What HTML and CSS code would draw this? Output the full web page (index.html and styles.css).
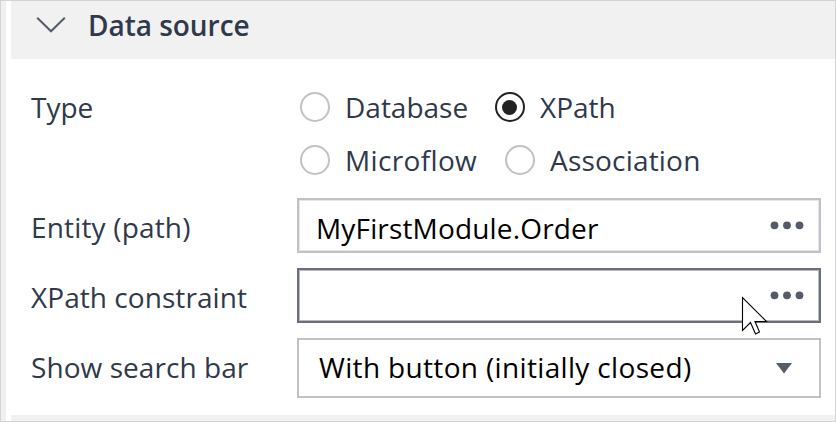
FILE: index.html
```html
<!DOCTYPE html>
<html lang="en">
<head>
<meta charset="utf-8">
<title>Data source</title>
<link rel="stylesheet" href="styles.css">
</head>
<body>
<div class="window">
  <div class="gutter"></div>
  <main class="panel">
    <header class="section-header">
      <svg class="chevron" width="30" height="18" viewBox="0 0 30 18"><path d="M1.2 1.8 15 15.3 28.8 1.8" fill="none" stroke="#555b68" stroke-width="2"/></svg>
      <h1 class="title">Data source</h1>
    </header>
    <form class="form">
      <div class="row row-type">
        <span class="label">Type</span>
        <div class="options">
          <div class="option-line">
            <label class="option"><span class="radio"></span><span class="t-database">Database</span></label>
            <label class="option"><span class="radio checked"></span><span class="t-xpath">XPath</span></label>
          </div>
          <div class="option-line">
            <label class="option"><span class="radio"></span><span class="t-microflow">Microflow</span></label>
            <label class="option"><span class="radio"></span><span class="t-association">Association</span></label>
          </div>
        </div>
      </div>
      <div class="row">
        <span class="label t-entity">Entity (path)</span>
        <div class="field"><span class="value t-order">MyFirstModule.Order</span>
          <svg class="dots" width="34" height="10" viewBox="0 0 34 10" fill="#555b68"><circle cx="4.5" cy="5.3" r="3.9"/><circle cx="17" cy="5.3" r="3.9"/><circle cx="29.5" cy="5.3" r="3.9"/></svg>
        </div>
      </div>
      <div class="row">
        <span class="label t-constraint">XPath constraint</span>
        <div class="field active"><span class="value"></span>
          <svg class="dots" width="34" height="10" viewBox="0 0 34 10" fill="#555b68"><circle cx="4.5" cy="5.3" r="3.9"/><circle cx="17" cy="5.3" r="3.9"/><circle cx="29.5" cy="5.3" r="3.9"/></svg>
          <svg class="cursor" width="28" height="40" viewBox="0 0 28 40"><path d="M1.5 1.5V34.5L9.5 26.5 14.5 38 18.5 36 14 25.5H25.5Z" fill="#fff" stroke="#000" stroke-width="1.1"/></svg>
        </div>
      </div>
      <div class="row">
        <span class="label t-search">Show search bar</span>
        <div class="field select"><span class="value t-button">With button (initially closed)</span>
          <svg class="arrow" width="16" height="11" viewBox="0 0 16 11"><path d="M0 0H16L8 10.5Z" fill="#555b68"/></svg>
        </div>
      </div>
    </form>
    <div class="next-section"></div>
  </main>
</div>
</body>
</html>
```
FILE: styles.css
```css
* { box-sizing: border-box; }
body { margin: 0; background: #fff; font-family: "Open Sans", "Noto Sans", sans-serif; font-size: 28px; line-height: 38px; color: #2f394b; }
.window { display: flex; width: 836px; height: 422px; border: 1px solid #d4d4d4; overflow: hidden; }
.gutter { width: 5px; margin-right: 5px; background: #f0f0f0; }
.panel { flex: 1; display: flex; flex-direction: column; }
.section-header { height: 58px; background: #f1f1f1; display: flex; align-items: flex-start; padding: 5px 0 0 25px; }
.chevron { margin: 10px 22px 0 0; }
.title { margin: 0; font-size: 28px; line-height: 38px; font-weight: 600; white-space: nowrap; letter-spacing: -.03px; }
.form { height: 356px; padding: 29px 14px 0 20px; }
.row { display: flex; height: 55px; margin-bottom: 15px; white-space: nowrap; }
.row-type { height: 95px; }
.label { width: 266px; padding-top: 10px; }
.row-type .label { padding-top: 0; width: 268px; }
.options { width: 420px; }
.option-line { display: flex; height: 53px; }
.option { display: flex; align-items: flex-start; }
.option-line .option:first-child { width: 195px; }
.option-line:last-child .option:first-child { width: 205px; }
.radio { width: 30px; height: 30px; margin: 4px 15.5px 0 .5px; border: 2px solid #c1c1c7; border-radius: 50%; }
.checked { border-color: #222; display: flex; align-items: center; justify-content: center; }
.checked::after { content: ""; width: 15px; height: 15px; border-radius: 50%; background: #222; }
.t-microflow { letter-spacing: .35px; }
.t-association { letter-spacing: .2px; }
.t-entity { letter-spacing: .17px; }
.t-order { letter-spacing: .16px; }
.t-constraint, .t-search { letter-spacing: .06px; }
.t-button { letter-spacing: .34px; }
.field { position: relative; width: 524px; height: 55px; border: 2px solid #c1c1c7; box-shadow: inset 0 0 0 1px #e6e6ea; display: flex; align-items: flex-start; padding: 9px 15px 0 17px; color: #000; }
.active { border-color: #6b6f7c; box-shadow: inset 0 0 0 1px #b8bac0; }
.value { flex: 1; }
.dots { margin-top: 11px; }
.cursor { position: absolute; left: 442px; top: 26px; }
.select { height: 60px; box-shadow: none; padding: 8px 15px 0 20px; }
.arrow { margin: 15px 12px 0 0; }
.next-section { flex: 1; background: #f1f1f1; }
```
